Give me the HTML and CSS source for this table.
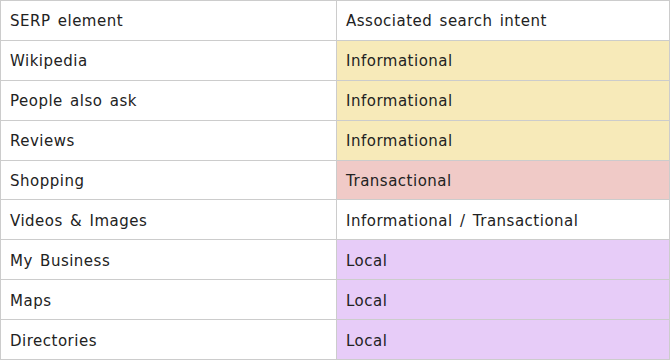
FILE: index.html
```html
<!DOCTYPE html>
<html>
<head>
<meta charset="utf-8">
<link rel="stylesheet" href="styles.css">
</head>
<body>
<table class="intent-table">
  <tr><td>SERP element</td><td>Associated search intent</td></tr>
  <tr><td>Wikipedia</td><td class="info">Informational</td></tr>
  <tr><td>People also ask</td><td class="info">Informational</td></tr>
  <tr><td>Reviews</td><td class="info">Informational</td></tr>
  <tr><td>Shopping</td><td class="trans">Transactional</td></tr>
  <tr><td>Videos &amp; Images</td><td>Informational / Transactional</td></tr>
  <tr><td>My Business</td><td class="local">Local</td></tr>
  <tr><td>Maps</td><td class="local">Local</td></tr>
  <tr><td>Directories</td><td class="local">Local</td></tr>
</table>
</body>
</html>
```
FILE: styles.css
```css
html, body {
  margin: 0;
  padding: 0;
  background: #ffffff;
}
.intent-table {
  border-collapse: collapse;
  width: 670px;
  table-layout: fixed;
  font-family: "DejaVu Sans", "Liberation Sans", sans-serif;
  font-size: 15px;
  letter-spacing: 0.5px;
  word-spacing: 2px;
  color: #222222;
}
.intent-table td {
  border: 1px solid #cccccc;
  height: 39.9px;
  padding: 2px 9px 0;
  vertical-align: middle;
  box-sizing: border-box;
  white-space: nowrap;
}
.intent-table td:first-child {
  width: 336px;
}
.intent-table .info {
  background: #f7eab9;
}
.intent-table .trans {
  background: #f0cac7;
}
.intent-table .local {
  background: #e7ccf8;
}
```
